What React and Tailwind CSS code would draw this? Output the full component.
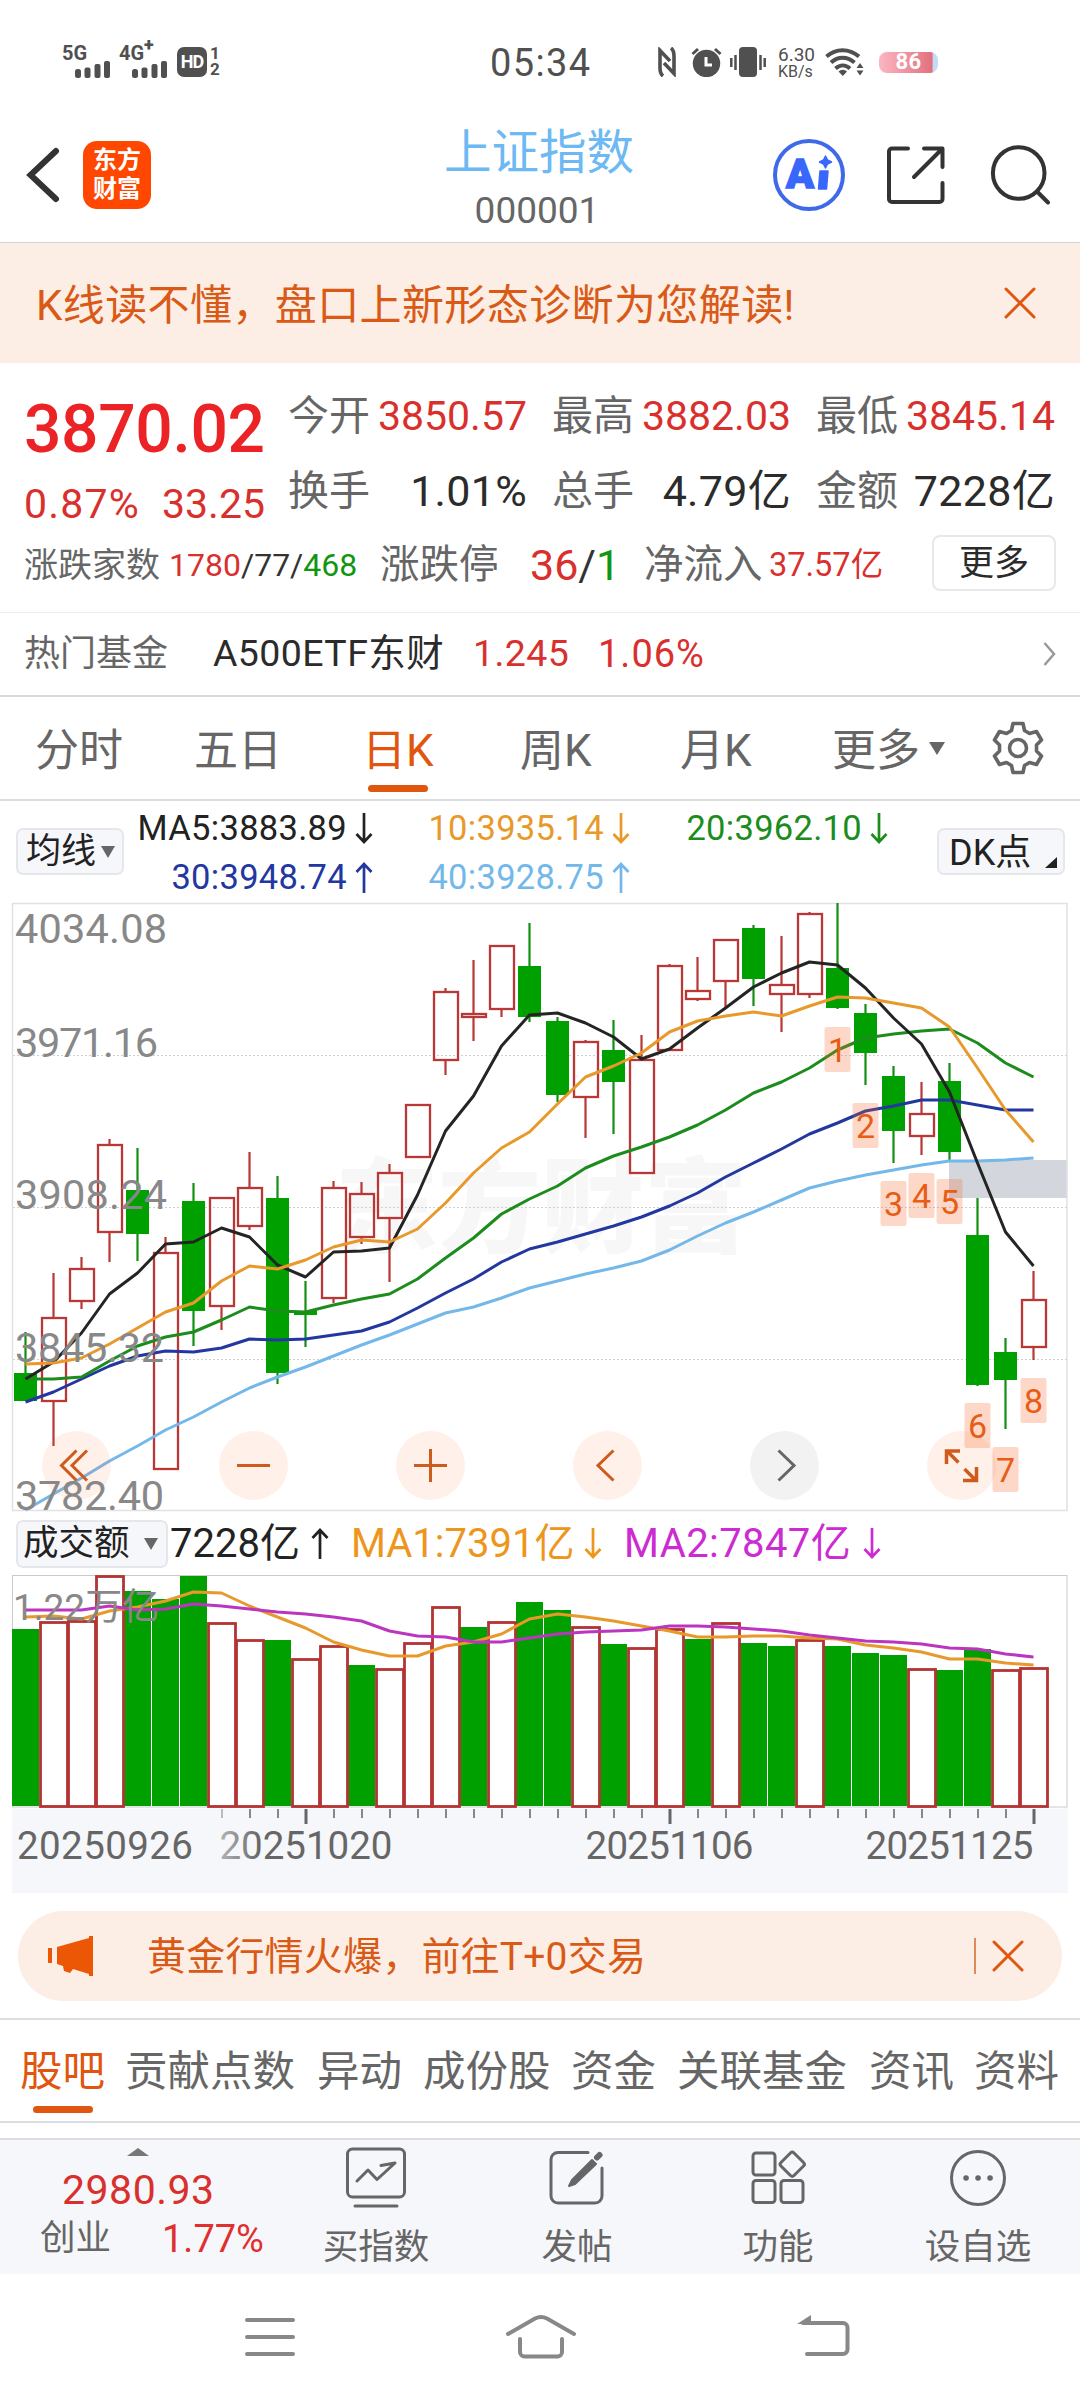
import { Fragment } from 'react';

// [up, bodyTop, bodyBottom, high, low]
const CANDLES = [
    [0, 1373, 1401, 1332, 1401], [1, 1317, 1402, 1273, 1446], [1, 1268, 1302, 1257, 1309], [1, 1144, 1233, 1139, 1262],
    [0, 1190, 1234, 1148, 1261], [1, 1252, 1470, 1237, 1470], [0, 1201, 1311, 1183, 1346], [1, 1197, 1307, 1197, 1330],
    [1, 1187, 1227, 1152, 1230], [0, 1198, 1373, 1176, 1384], [0, 1311, 1315, 1281, 1347], [1, 1187, 1299, 1181, 1303],
    [1, 1193, 1238, 1182, 1244], [1, 1172, 1219, 1164, 1282], [1, 1104, 1158, 1104, 1158], [1, 991, 1061, 988, 1075],
    [1, 1013, 1018, 960, 1041], [1, 945, 1010, 945, 1017], [0, 966, 1017, 923, 1022], [0, 1021, 1095, 1017, 1102],
    [1, 1041, 1098, 1040, 1138], [0, 1050, 1082, 1020, 1134], [1, 1059, 1174, 1035, 1174], [1, 965, 1051, 964, 1051],
    [1, 990, 1000, 957, 1001], [1, 939, 982, 939, 1008], [0, 928, 979, 925, 1006], [1, 984, 995, 936, 1032],
    [1, 913, 995, 912, 998], [0, 968, 1008, 903, 1009], [0, 1013, 1053, 1004, 1085], [0, 1076, 1131, 1066, 1163],
    [1, 1113, 1137, 1082, 1155], [0, 1081, 1152, 1063, 1161], [0, 1235, 1385, 1198, 1386], [0, 1352, 1380, 1338, 1429],
    [1, 1299, 1348, 1271, 1360],
];

const MA_LINES = [
    { color: '#74b8ea', values: [1510, 1494, 1478, 1461, 1446, 1430, 1417, 1402, 1388, 1377, 1367, 1356, 1345, 1335, 1324, 1313, 1307, 1298, 1288, 1281, 1274, 1268, 1261, 1250, 1236, 1223, 1212, 1200, 1188, 1181, 1175, 1170, 1165, 1161, 1161, 1160, 1158] },
    { color: '#22379f', values: [1402, 1392, 1379, 1366, 1356, 1351, 1352, 1348, 1339, 1340, 1339, 1335, 1331, 1322, 1308, 1293, 1279, 1262, 1249, 1242, 1234, 1226, 1217, 1206, 1193, 1177, 1163, 1149, 1134, 1123, 1111, 1106, 1100, 1100, 1105, 1110, 1110] },
    { color: '#1c8c1c', values: [1379, 1379, 1377, 1361, 1346, 1337, 1332, 1320, 1307, 1311, 1312, 1305, 1299, 1294, 1279, 1258, 1238, 1214, 1199, 1186, 1168, 1156, 1147, 1137, 1125, 1110, 1093, 1082, 1068, 1050, 1038, 1034, 1031, 1029, 1043, 1063, 1077] },
    { color: '#242424', values: [1379, 1362, 1333, 1294, 1273, 1244, 1242, 1228, 1237, 1265, 1277, 1252, 1251, 1248, 1195, 1131, 1096, 1046, 1015, 1013, 1023, 1037, 1059, 1049, 1028, 1008, 987, 973, 962, 965, 988, 1018, 1044, 1092, 1163, 1232, 1266] },
    { color: '#e8992b', values: [1364, 1363, 1358, 1344, 1328, 1312, 1303, 1281, 1266, 1269, 1260, 1247, 1240, 1242, 1229, 1203, 1173, 1148, 1132, 1104, 1077, 1066, 1053, 1032, 1021, 1016, 1012, 1016, 1006, 997, 998, 1003, 1008, 1027, 1068, 1110, 1142] },
];

const VOLUME_TOPS = [1629, 1621, 1620, 1575, 1591, 1599, 1576, 1622, 1639, 1640, 1658, 1645, 1665, 1668, 1642, 1606, 1627, 1621, 1602, 1610, 1626, 1644, 1647, 1628, 1639, 1622, 1643, 1646, 1639, 1646, 1653, 1655, 1668, 1670, 1649, 1669, 1667];
// Turnover bars are coloured by the previous close, so they differ from the candle bodies
const VOLUME_UP = '0111000110110111010010110100100010011';

const VOLUME_LINES = [
    { color: '#e8992b', values: [1617, 1616, 1619, 1611, 1607, 1601, 1592, 1593, 1606, 1617, 1628, 1642, 1650, 1656, 1656, 1646, 1642, 1634, 1619, 1614, 1617, 1621, 1626, 1631, 1637, 1637, 1636, 1636, 1638, 1639, 1645, 1648, 1652, 1659, 1659, 1663, 1665] },
    { color: '#bb35bf', values: [1610, 1610, 1610, 1606, 1610, 1609, 1604, 1606, 1609, 1612, 1614, 1617, 1621, 1631, 1636, 1637, 1642, 1642, 1638, 1634, 1632, 1631, 1630, 1626, 1626, 1627, 1629, 1631, 1635, 1638, 1641, 1642, 1644, 1648, 1649, 1654, 1657] },
];

const BADGES = [[29, 1027], [30, 1103], [31, 1181], [32, 1173], [33, 1179], [34, 1403], [35, 1447], [36, 1378]];
const GRID_Y = [1055.5, 1207.5, 1359.5];
const PRICE_LABELS = [['4034.08', 943, 152], ['3971.16', 1057, 143], ['3908.24', 1209, 152], ['3845.32', 1361.5, 149], ['3782.40', 1509.5, 149]];

const cx = (i) => 25.5 + 28 * i;
const toPoints = (values) => values.map((y, i) => `${cx(i)},${y}`).join(' ');

function SignalBars() {
    return (
        <svg className="w-[36px] h-[17px]" viewBox="0 0 36 17" fill="#505050">
            <rect x="0" y="8" width="6" height="9" rx="2.5" />
            <rect x="9.5" y="6.500" width="6" height="10.500" rx="2" />
            <rect x="19.500" y="3" width="6" height="14" rx="2" />
            <rect x="29" y="0" width="6" height="17" rx="2" />
        </svg>
    );
}

function StatusBar() {
    return (
        <div className="h-[124px] flex items-center text-[#505050] leading-none">
            <div className="w-[490px] pl-[62px] flex items-center">
                <div className="w-[57px] h-[32px]">
                    <div className="text-[20px] font-bold leading-[14px]">5G</div>
                    <div className="pl-[13px] pt-px"><SignalBars /></div>
                </div>
                <div className="w-[58px] h-[32px]">
                    <div className="text-[20px] font-bold leading-[14px]">4G<sup className="text-[18px] font-black">+</sup></div>
                    <div className="pl-[13px] pt-px"><SignalBars /></div>
                </div>
                <div className="w-[30px] h-[30px] rounded-[7px] bg-[#505050] text-white font-bold text-[18px] flex items-center justify-center tracking-tighter">HD</div>
                <div className="ml-[3px] text-[17px] font-bold">
                    <div className="leading-[15px]">1</div>
                    <div className="leading-[17px]">2</div>
                </div>
            </div>
            <div className="w-[168px] pt-[2px] text-[38px] tracking-[1.4px]">05:34</div>
            <svg className="w-[18px] h-[30px]" viewBox="0 0 18 30" fill="none" stroke="#505050" strokeWidth="3.600">
                <path d="M5 29C2.500 27 2 25 2 21V3.500L12 14" />
                <path d="M13 1C15.500 3 16 5 16 9V26.500L6 16" />
            </svg>
            <svg className="ml-[15px] w-[31px] h-[30px]" viewBox="0 0 31 30">
                <circle cx="15.500" cy="16.500" r="13.700" fill="#505050" />
                <path d="M1.500 7L7 2M29.500 7L24 2" stroke="#505050" strokeWidth="3" />
                <path d="M15 10v8h6" stroke="#fff" strokeWidth="3" fill="none" />
            </svg>
            <svg className="ml-[8px] w-[36px] h-[30px]" viewBox="0 0 36 30" stroke="#505050" strokeWidth="2.500">
                <rect x="9" y="0" width="18" height="30" rx="4" fill="#505050" stroke="none" />
                <path d="M1.300 11v9M5.500 8v15M30.500 8v15M34.700 11v9" />
            </svg>
            <div className="ml-[12px] w-[47px]">
                <div className="text-[19px] leading-[19px]">6.30</div>
                <div className="text-[16px] leading-[16px]">KB/s</div>
            </div>
            <svg className="w-[39px] h-[28px]" viewBox="0 0 39 28" fill="none" stroke="#505050" strokeWidth="4">
                <path d="M1.500 8.500C11 0 24 0 34 8.500" />
                <path d="M6 14.500C13 8 22 8 29.500 14.500" />
                <path d="M10.500 20.500C15 16.500 20.500 16.500 25 20.500" />
                <path d="M13.500 23.500a6 6 0 0 1 8.500 0L17.800 28z" fill="#505050" stroke="none" />
                <path d="M31.500 20l3.500-5 3.500 5zM31.500 22.500l3.500 5 3.500-5z" fill="#505050" stroke="none" />
            </svg>
            <div className="ml-[15px] w-[59px] h-[21px] rounded-[8px] bg-linear-to-r from-[#fbb6c2] from-0% via-[#e2707f] via-90% to-[#c3dbf7] to-92% text-white text-[22px] font-bold flex items-center justify-center tracking-[0.5px]">86</div>
        </div>
    );
}

function Header() {
    return (
        <div className="h-[119px] flex border-b border-[#d4d5d8]">
            <div className="w-[306px] h-[102px] flex items-center pl-[26px]">
                <svg className="w-[34px] h-[56px]" viewBox="0 0 34 56" fill="none" stroke="#333" strokeWidth="6" strokeLinecap="round">
                    <path d="M30 4L4.500 28 30 52" />
                </svg>
                <div className="ml-[23px] w-[68px] h-[68px] rounded-[14px] bg-[#ff4700] text-white text-[24px] font-bold leading-[29px] text-center pt-[5px]">
                    东方<br />财富
                </div>
            </div>
            <div className="flex-1 text-center whitespace-nowrap">
                <div className="pt-px text-[47.500px] leading-[56px] text-[#6cb9f3]">上证指数</div>
                <div className="text-[37px] leading-[60px] text-[#666] -ml-1">000001</div>
            </div>
            <div className="w-[308px] h-[102px] flex items-center">
                <div className="w-[74px] h-[74px]">
                    <svg viewBox="0 0 74 74">
                        <circle cx="37" cy="37" r="34" fill="none" stroke="#3f69e8" strokeWidth="4" />
                        <text x="14" y="50" fontSize="40" fontWeight="900" fill="#3a67fb" stroke="#3a67fb" strokeWidth="1.500" textLength="28" lengthAdjust="spacingAndGlyphs">A</text>
                        <path d="M48 33h8l-1.500 18h-8zM53.500 18l2 4 4 2-4 2-2 4-2-4-4-2 4-2z" fill="#3a67fb" stroke="#3a67fb" strokeWidth="1.500" strokeLinejoin="round" />
                    </svg>
                </div>
                <svg className="ml-[41px] w-[58px] h-[58px]" viewBox="0 0 58 58" fill="none" stroke="#333" strokeWidth="4" strokeLinecap="round" strokeLinejoin="round">
                    <path d="M21 2.500H5a3 3 0 0 0-3 3V53a3 3 0 0 0 3 3H52.500a3 3 0 0 0 3-3V37" />
                    <path d="M37 2.500H55.500V21M54 4L27 31" />
                </svg>
                <svg className="ml-[43px] w-[62px] h-[62px]" viewBox="0 0 62 62" fill="none" stroke="#333" strokeWidth="4" strokeLinecap="round">
                    <circle cx="30.700" cy="29" r="25.800" />
                    <path d="M49 47.500L60 58.500" />
                </svg>
            </div>
        </div>
    );
}

function CloseIcon({ className }) {
    return (
        <svg className={className} viewBox="0 0 32 32" fill="none" stroke="#e0560f" strokeWidth="3" strokeLinecap="round">
            <path d="M2 2L30 30M30 2L2 30" />
        </svg>
    );
}

function Metric({ label, value, red }) {
    return (
        <div className="w-[239px] h-[75px] flex items-center justify-between">
            <span className="text-[41px]">{label}</span>
            {red
                ? <span className="text-[41px] text-[#d9302e]">{value}</span>
                : <span className="text-[43px] tracking-[0.3px] text-[#2b2b2b]">{value}</span>}
        </div>
    );
}

function Quote() {
    return (
        <div className="h-[250px] border-b border-[#ececee] text-[#666] leading-none whitespace-nowrap">
            <div className="h-[174px] flex">
                <div className="w-[288px] pl-[24px] pt-[25px] text-[#d9302e]">
                    <div className="h-[83px] flex items-center text-[66px] font-medium tracking-[-0.4px] text-[#ec2326]">3870.02</div>
                    <div className="h-[66px] w-[241px] flex items-center justify-between text-[41px]">
                        <span className="tracking-[1.2px]">0.87%</span>
                        <span>33.25</span>
                    </div>
                </div>
                <div className="pt-[16px]">
                    <div className="flex gap-[25px]">
                        <Metric label="今开" value="3850.57" red />
                        <Metric label="最高" value="3882.03" red />
                        <Metric label="最低" value="3845.14" red />
                    </div>
                    <div className="flex gap-[25px]">
                        <Metric label="换手" value="1.01%" />
                        <Metric label="总手" value="4.79亿" />
                        <Metric label="金额" value="7228亿" />
                    </div>
                </div>
            </div>
            <div className="h-[56px] pl-[24px] flex items-center">
                <span className="w-[145px] text-[34px]">涨跌家数</span>
                <span className="w-[211px] text-[32px] text-[#333]">
                    <span className="text-[#d9302e]">1780</span>/77/<span className="text-[#109610]">468</span>
                </span>
                <span className="w-[150px] text-[39.500px]">涨跌停</span>
                <span className="w-[114px] text-[43px] text-[#333]">
                    <span className="text-[#d9302e]">36</span>/<span className="text-[#109610]">1</span>
                </span>
                <span className="w-[125px] text-[39.500px]">净流入</span>
                <span className="w-[163px] text-[32.500px] text-[#d9302e]">37.57亿</span>
                <span className="-mt-[4px] w-[124px] h-[56px] flex items-center justify-center border-2 border-[#e8e8ea] rounded-[8px] text-[35px] text-[#2b2b2b]">更多</span>
            </div>
        </div>
    );
}

function HotFund() {
    return (
        <div className="h-[84px] pl-[24px] pr-[24px] flex items-center border-b-2 border-[#d9dadd] leading-none whitespace-nowrap">
            <span className="w-[189px] text-[36px] text-[#666]">热门基金</span>
            <span className="w-[260px] text-[37.500px] tracking-[0.4px] text-[#2b2b2b]">A500ETF东财</span>
            <span className="w-[125px] text-[37.500px] tracking-[0.4px] text-[#d9302e]">1.245</span>
            <span className="text-[38px] tracking-[1px] text-[#d9302e]">1.06%</span>
            <svg className="ml-auto w-[13px] h-[24px]" viewBox="0 0 13 24" fill="none" stroke="#999" strokeWidth="2.500">
                <path d="M1.500 1L11 12 1.500 23" />
            </svg>
        </div>
    );
}

function PeriodTabs() {
    return (
        <div className="h-[104px] pl-[35px] flex items-center border-b-2 border-[#dcdde0] text-[44px] text-[#666] leading-none whitespace-nowrap">
            <span className="pt-[5px] w-[159px]">分时</span>
            <span className="pt-[5px] w-[168px]">五日</span>
            <span className="pt-[5px] relative w-[158px] text-[#e0560f]">
                日K
                <span className="absolute left-[6px] top-[61px] w-[60px] h-[7px] rounded-full bg-[#e0560f]" />
            </span>
            <span className="pt-[5px] w-[160px]">周K</span>
            <span className="pt-[5px] w-[152px]">月K</span>
            <span className="pt-[5px] w-[97px]">更多</span>
            <svg className="w-[16px] h-[13px]" viewBox="0 0 16 13" fill="#666"><path d="M0 0H16L8 13z" /></svg>
            <svg className="ml-[46px] w-[54px] h-[54px]" viewBox="0 0 54 54" fill="none" stroke="#666" strokeWidth="3.600" strokeLinejoin="round">
                <path d="M22 2.500H32L33.500 9.500 38.500 12.500 45.500 10.500 50.500 19 45.500 24V30L50.500 35 45.500 43.500 38.500 41.500 33.500 44.500 32 51.500H22L20.500 44.500 15.500 41.500 8.500 43.500 3.500 35 8.500 30V24L3.500 19 8.500 10.500 15.500 12.500 20.500 9.500z" />
                <circle cx="27" cy="27" r="8.500" />
            </svg>
        </div>
    );
}

function Arrow({ up }) {
    return (
        <svg className="w-[18px] h-[31px]" viewBox="0 0 18 31" fill="none" stroke="currentColor" strokeWidth="2.700">
            <path d={up ? 'M9 31V2M1.500 10L9 2 16.500 10' : 'M9 0V29M1.500 21L9 29 16.500 21'} />
        </svg>
    );
}

function MaHeader() {
    return (
        <div className="h-[102px] pl-[16px] pr-[15px] flex leading-none whitespace-nowrap">
            <div className="mt-[27px] w-[108px] h-[47px] rounded-[7px] border-2 border-[#e6e7ec] bg-[#f6f7fa] flex items-center pl-[8px] text-[35px] text-[#222]">
                均线
                <svg className="ml-[5px] w-[14px] h-[12px]" viewBox="0 0 14 12" fill="#666"><path d="M0 0H14L7 12z" /></svg>
            </div>
            <div className="pt-[3px] grid grid-cols-[249px_257px_258px] auto-rows-[49px] text-[34.500px] tracking-[0.3px]">
                <div className="flex items-center justify-end gap-[8px] text-[#222]">MA5:3883.89<Arrow /></div>
                <div className="flex items-center justify-end gap-[8px] text-[#e8992b]">10:3935.14<Arrow /></div>
                <div className="flex items-center justify-end gap-[8px] text-[#1c8c1c]">20:3962.10<Arrow /></div>
                <div className="flex items-center justify-end gap-[8px] text-[#22379f]">30:3948.74<Arrow up /></div>
                <div className="flex items-center justify-end gap-[8px] text-[#74b8ea]">40:3928.75<Arrow up /></div>
            </div>
            <div className="ml-auto mt-[27px] w-[128px] h-[47px] rounded-[7px] border-2 border-[#e6e7ec] bg-[#f6f7fa] flex items-center pl-[10px] text-[36px] text-[#222]">
                <span className="pt-[3px] w-[88px]">DK点</span>
                <svg className="ml-[8px] mt-[22px] w-[12px] h-[11px]" viewBox="0 0 12 11" fill="#222"><path d="M12 0V11H0z" /></svg>
            </div>
        </div>
    );
}

function CandleChart() {
    return (
        <svg className="block w-[1080px] h-[609px] overflow-visible" viewBox="0 903 1080 609">
            <text x="335" y="1245" fontSize="103" fontWeight="900" fill="#f7f7f7">东方财富</text>
            {GRID_Y.map((y) => (
                <line key={y} x1="13" x2="1067" y1={y} y2={y} stroke="#d0d0d0" strokeWidth="1" strokeDasharray="2 2" />
            ))}
            <rect x="949" y="1160" width="118" height="38" fill="#d3d7dd" />
            <rect x="12.500" y="903.500" width="1054.500" height="607" fill="none" stroke="#e1e1e3" strokeWidth="1.500" />
            {CANDLES.map(([up, top, bottom, high, low], i) => (
                <Fragment key={i}>
                    <path d={`M${cx(i)} ${high}V${top}M${cx(i)} ${bottom}V${low}`} stroke={up ? '#b93735' : '#128f12'} strokeWidth="2.200" />
                    {up
                        ? <rect x={cx(i) - 11.5} y={top + 1} width="24" height={Math.max(bottom - top - 2, 2)} fill="none" stroke="#b93735" strokeWidth="2.300" />
                        : <rect x={cx(i) - 11.5} y={top} width="23" height={bottom - top} fill="#00a000" />}
                </Fragment>
            ))}
            {MA_LINES.map((line) => (
                <polyline key={line.color} points={toPoints(line.values)} fill="none" stroke={line.color} strokeWidth="3" strokeLinejoin="round" />
            ))}
            {BADGES.map(([i, y], n) => (
                <Fragment key={i}>
                    <rect x={cx(i) - 13} y={y} width="26" height="45" rx="2" fill="#f96a2c" fillOpacity="0.260" />
                    <text x={cx(i)} y={y + 35} fontSize="34" textAnchor="middle" fill="#e85c14">{n + 1}</text>
                </Fragment>
            ))}
            {[76.5, 253.5, 430.5, 607.5, 961.5].map((x) => (
                <circle key={x} cx={x} cy="1465.500" r="34.500" fill="#ff6a28" fillOpacity="0.100" />
            ))}
            <circle cx="784.500" cy="1465.500" r="34.500" fill="#f2f2f2" />
            <g fill="none" stroke="#cd5b1c" strokeWidth="3">
                <path d="M76.500 1450.500L61.500 1465.500 76.500 1480.500M87 1450.500L72 1465.500 87 1480.500" />
                <path d="M237 1465.500H270M414 1465.500H447M430.500 1449V1482" />
                <path d="M613.500 1450.500L598 1465.500 613.500 1480.500" />
                <path d="M778.500 1450.500L794 1465.500 778.500 1480.500" stroke="#666" />
                <path d="M946.500 1464V1451H960M947 1451L958.500 1462.500M963 1480.500H976.500V1467M964.500 1469L976 1480.500" strokeWidth="3.500" />
            </g>
            {PRICE_LABELS.map(([label, y, width]) => (
                <text key={label} x="15" y={y} fontSize="41.500" textLength={width} fill="#888">{label}</text>
            ))}
        </svg>
    );
}

function VolumeHeader() {
    return (
        <div className="h-[63px] pl-[16px] flex items-center text-[40px] leading-none whitespace-nowrap">
            <div className="w-[152px] h-[48px] rounded-[7px] border-2 border-[#e6e7ec] bg-[#f6f7fa] flex items-center pl-[5px] text-[35.500px] text-[#222]">
                成交额
                <svg className="ml-[14px] w-[14px] h-[12px]" viewBox="0 0 14 12" fill="#666"><path d="M0 0H14L7 12z" /></svg>
            </div>
            <div className="ml-[2px] w-[181px] flex items-center gap-[11px] text-[#222]">7228亿<Arrow up /></div>
            <div className="w-[273px] flex items-center gap-[10px] text-[#ee961c]">MA1:7391亿<Arrow /></div>
            <div className="flex items-center gap-[12px] tracking-[0.4px] text-[#cc2bd2]">MA2:7847亿<Arrow /></div>
        </div>
    );
}

function VolumeChart() {
    return (
        <svg className="block w-[1080px] h-[318px]" viewBox="0 1575 1080 318">
            <rect x="12" y="1808.500" width="1056" height="84.500" fill="#f6f7fa" />
            <rect x="12.500" y="1575.500" width="1054.500" height="231.500" fill="#fff" stroke="#cacaca" strokeWidth="1" />
            {VOLUME_TOPS.map((top, i) => (
                VOLUME_UP[i] === '1' ? null : <rect key={i} x={12 + 28 * i} y={top} width="27" height={1806 - top} fill="#00a000" />
            ))}
            {VOLUME_TOPS.map((top, i) => (
                VOLUME_UP[i] === '1' ? <rect key={i} x={12.5 + 28 * i} y={top + 1.5} width="27" height={1805 - top} fill="#fff" stroke="#b33432" strokeWidth="2.800" /> : null
            ))}
            {VOLUME_LINES.map((line) => (
                <polyline key={line.color} points={toPoints(line.values)} fill="none" stroke={line.color} strokeWidth="3" strokeLinejoin="round" />
            ))}
            <text x="13" y="1620" fontSize="37" fill="#888">1.22万亿</text>
            {VOLUME_TOPS.map((_, i) => {
                if (i < 7) return null;
                const major = i === 10 || i === 23 || i === 36;
                return <line key={i} x1={cx(i) + 0.5} x2={cx(i) + 0.5} y1="1809" y2={major ? 1824 : 1818} stroke={i === 7 ? '#bbb' : major ? '#666' : '#888'} strokeWidth={major ? 3 : 2} />;
            })}
            <defs>
                <linearGradient id="fade" gradientUnits="userSpaceOnUse" x1="215" y1="0" x2="260" y2="0">
                    <stop offset="0" stopColor="#bdbdbd" />
                    <stop offset="1" stopColor="#666" />
                </linearGradient>
            </defs>
            <g fontSize="38.500" fill="#666">
                <text x="17" y="1859" textLength="176">20250926</text>
                <text x="219.500" y="1859" textLength="173" fill="url(#fade)">20251020</text>
                <text x="585.500" y="1859" textLength="168">20251106</text>
                <text x="865.500" y="1859" textLength="168">20251125</text>
            </g>
        </svg>
    );
}

function GoldBanner() {
    return (
        <div className="h-[125px] pt-[18px] px-[18px]">
            <div className="h-[90px] rounded-full bg-[#fceee4] flex items-center text-[#d95a17] leading-none whitespace-nowrap">
                <svg className="ml-[30px] w-[46px] h-[40px]" viewBox="0 0 46 40" fill="#eb5704">
                    <path d="M0 12h4v15H0zM9 11L41 2V0h4v40h-4v-2l-16-5-3 4-6-2-1-5-6-2z" />
                </svg>
                <span className="ml-[53px] pt-[2px] text-[39px] tracking-[0.2px]">黄金行情火爆，前往T+0交易</span>
                <span className="ml-auto w-[2px] h-[36px] bg-[#dd8a5c]" />
                <CloseIcon className="ml-[16px] mr-[38px] w-[32px] h-[32px]" />
            </div>
        </div>
    );
}

function SectionTabs() {
    return (
        <div className="h-[105px] pl-[20px] pt-[4px] flex items-center border-y-2 border-[#dcdde0] text-[42.500px] text-[#666] leading-none whitespace-nowrap">
            <span className="relative w-[105px] text-[#e0560f]">
                股吧
                <span className="absolute left-[13px] top-[55px] w-[60px] h-[7px] rounded-full bg-[#e0560f]" />
            </span>
            <span className="w-[192px]">贡献点数</span>
            <span className="w-[106px]">异动</span>
            <span className="w-[148px]">成份股</span>
            <span className="w-[106px]">资金</span>
            <span className="w-[192px]">关联基金</span>
            <span className="w-[105px]">资讯</span>
            <span>资料</span>
        </div>
    );
}

function BottomItem({ label, className, children }) {
    return (
        <div className={className}>
            <svg className="block mx-auto w-[62px] h-[62px]" viewBox="0 0 62 62" fill="none" stroke="#666" strokeWidth="3" strokeLinecap="round" strokeLinejoin="round">
                {children}
            </svg>
            <div className="mt-[16px] h-[45px] flex items-center justify-center text-[35.500px] text-[#666]">{label}</div>
        </div>
    );
}

function BottomBar() {
    return (
        <div className="mt-[15px] h-[136px] flex bg-[#f6f7fa] border-t-2 border-[#dcdde0] leading-none whitespace-nowrap">
            <div className="w-[278px] pt-[8px] pl-[40px]">
                <svg className="ml-[87px] w-[22px] h-[8px] block" viewBox="0 0 22 8" fill="#777"><path d="M11 0L22 8H0z" /></svg>
                <div className="mt-[11px] h-[46px] flex items-center pl-[22px] text-[41px] tracking-[0.5px] text-[#d9302e]">2980.93</div>
                <div className="h-[52px] flex items-center">
                    <span className="w-[122px] text-[35.500px] text-[#666]">创业</span>
                    <span className="text-[38px] text-[#e02f2e]">1.77%</span>
                </div>
            </div>
            <BottomItem label="买指数" className="w-[196px] pt-[7px]">
                <rect x="2.500" y="2" width="57" height="48" rx="5" />
                <path d="M12 34L23 23 32 32.500 50 16M36 18.500L50 16M10 59H52" />
            </BottomItem>
            <BottomItem label="发帖" className="w-[206px] pt-[7px]">
                <path d="M42 5.500H12a7 7 0 0 0-7 7V49a7 7 0 0 0 7 7H49a7 7 0 0 0 7-7V21" />
                <path d="M23 39L26 33 46 13 50 17 29 37z" fill="#666" strokeWidth="2" />
                <path d="M51 10.500L53.500 8" strokeWidth="6" />
            </BottomItem>
            <BottomItem label="功能" className="w-[196px] pt-[7px]">
                <rect x="6" y="6" width="22" height="22" rx="3" />
                <rect x="6" y="33.500" width="22" height="22" rx="3" />
                <rect x="34" y="33.500" width="22" height="22" rx="3" />
                <rect x="36" y="8" width="18.500" height="18.500" rx="2.500" transform="rotate(45 45.250 17.250)" />
            </BottomItem>
            <BottomItem label="设自选" className="w-[204px] pt-[7px]">
                <circle cx="31" cy="31" r="26.500" />
                <path d="M19 31h.1M31 31h.1M43 31h.1" strokeWidth="5.500" />
            </BottomItem>
        </div>
    );
}

function SystemNav() {
    return (
        <div className="h-[126px] pl-[244px] pt-[40px] flex">
            <svg className="w-[52px] h-[46px]" viewBox="0 0 52 46" stroke="#888" strokeWidth="4" strokeLinecap="round">
                <path d="M3 6H49M3 23H49M3 40H49" />
            </svg>
            <svg className="ml-[209px] w-[72px] h-[46px]" viewBox="0 0 72 46" fill="none" stroke="#888" strokeWidth="4" strokeLinecap="round">
                <path d="M3 20L30 4.500Q36 1.500 42 4.500L69 20M15 25V38a4.500 4.500 0 0 0 4.500 4.500H52.500A4.500 4.500 0 0 0 57 38V25" />
            </svg>
            <svg className="ml-[220px] w-[53px] h-[46px]" viewBox="0 0 53 46" fill="none" stroke="#888" strokeWidth="4" strokeLinecap="round">
                <path d="M6 9H46a4.500 4.500 0 0 1 4.500 4.500V35.500A4.500 4.500 0 0 1 46 40H10" />
                <path d="M0 10L14 1V10z" fill="#888" stroke="none" />
            </svg>
        </div>
    );
}

function App() {
    return (
        <div className="w-[1080px] h-[2400px] overflow-hidden bg-white font-[Roboto,'Noto_Sans_CJK_SC',sans-serif]">
            <StatusBar />
            <Header />
            <div className="h-[120px] pl-[36px] pr-[44px] flex items-center justify-between bg-[#fceee4] text-[42px] text-[#d95a17] leading-none whitespace-nowrap">
                <span className="pt-[5px] tracking-[0.4px]">K线读不懂，盘口上新形态诊断为您解读!</span>
                <CloseIcon className="w-[32px] h-[32px]" />
            </div>
            <Quote />
            <HotFund />
            <PeriodTabs />
            <MaHeader />
            <CandleChart />
            <VolumeHeader />
            <VolumeChart />
            <GoldBanner />
            <SectionTabs />
            <BottomBar />
            <SystemNav />
        </div>
    );
}

export default App;
